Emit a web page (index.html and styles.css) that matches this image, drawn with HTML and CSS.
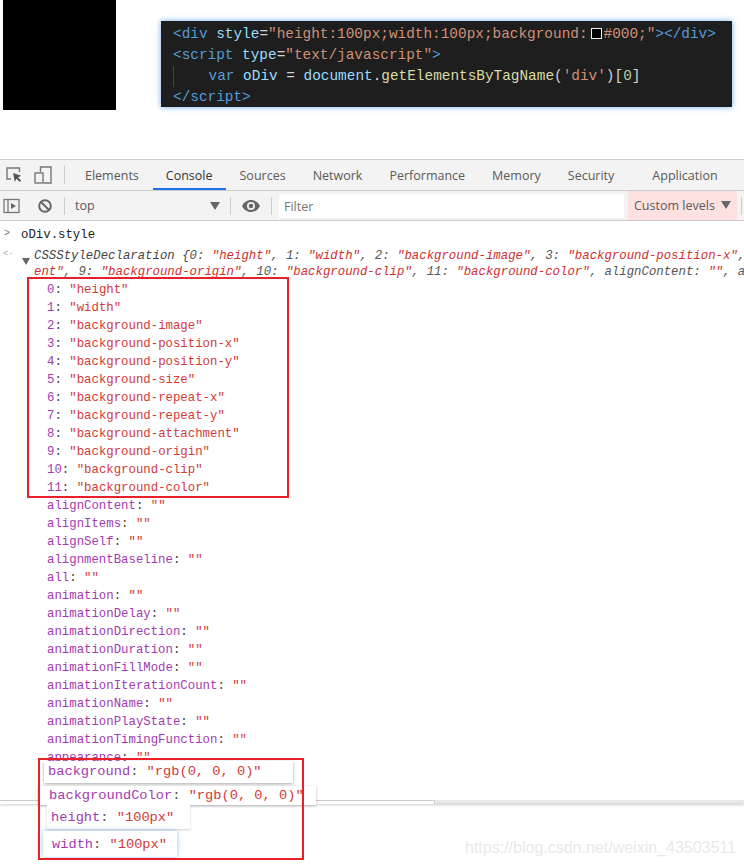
FILE: index.html
```html
<!DOCTYPE html>
<html lang="en">
<head>
    <meta charset="UTF-8">
    <meta name="viewport" content="width=device-width, initial-scale=1.0">
    <title>oDiv.style</title>
    <link rel="stylesheet" href="styles.css">
</head>
<body>
    <div class="page">
        <div class="top">
            <div class="black-box"></div>
            <pre class="code"><span class="tag">&lt;div</span> <span class="attr">style</span>=<span class="str">"height:100px;width:100px;background:</span><span class="swatch"></span><span class="str">#000;"</span><span class="tag">&gt;&lt;/div&gt;</span>
<span class="tag">&lt;script</span> <span class="attr">type</span>=<span class="str">"text/javascript"</span><span class="tag">&gt;</span>
<span class="guide"></span>    <span class="tag">var</span> <span class="attr">oDiv</span> = <span class="attr">document</span>.<span class="fn">getElementsByTagName</span>(<span class="str">'div'</span>)[<span class="num">0</span>]
<span class="tag">&lt;/script&gt;</span></pre>
        </div>

        <div class="tabbar">
            <div class="tool-icons">
                <svg width="18" height="18" viewBox="0 0 18 18" fill="none" stroke="#777" stroke-width="1.4">
                    <path d="M14.500 6V2H2v11h4"/>
                    <path d="M8 7l1.800 9 1.700-3.300 3.300 3.300 1.400-1.400-3.200-3.200 3.200-1.600z" fill="#555" stroke="none"/>
                </svg>
                <svg width="18" height="18" viewBox="0 0 18 18" fill="none" stroke="#777" stroke-width="1.400">
                    <path d="M6.500 6V1h10.500v16H10"/>
                    <rect x="1" y="7" width="8" height="10"/>
                </svg>
            </div>
            <div class="divider"></div>
            <div class="tabs">
                <span class="tab">Elements</span>
                <span class="tab active">Console</span>
                <span class="tab">Sources</span>
                <span class="tab">Network</span>
                <span class="tab">Performance</span>
                <span class="tab">Memory</span>
                <span class="tab">Security</span>
                <span class="tab app">Application</span>
            </div>
        </div>

        <div class="toolbar">
            <svg class="sidebar-icon" width="17" height="16" viewBox="0 0 17 16" fill="none" stroke="#777" stroke-width="1.3">
                <rect x="1" y="1.500" width="15" height="13"/>
                <path d="M5 1.500v13"/>
                <path d="M8 5l5 3-5 3z" fill="#666" stroke="none"/>
            </svg>
            <svg class="no-icon" width="14" height="14" viewBox="0 0 14 14" fill="none" stroke="#666" stroke-width="2">
                <circle cx="7" cy="7" r="5.800"/>
                <path d="M3 3l8 8"/>
            </svg>
            <div class="divider"></div>
            <span class="context">top</span>
            <span class="caret"></span>
            <div class="divider"></div>
            <svg class="eye-icon" width="18" height="12" viewBox="0 0 18 12">
                <path d="M9 0C5 0 1.700 2.500 0 6c1.700 3.500 5 6 9 6s7.300-2.500 9-6c-1.700-3.500-5-6-9-6zm0 10a4 4 0 1 1 0-8 4 4 0 0 1 0 8zm0-6.300a2.300 2.300 0 1 0 0 4.600 2.300 2.300 0 0 0 0-4.600z" fill="#666"/>
            </svg>
            <div class="divider"></div>
            <div class="filter">Filter</div>
            <div class="levels">Custom levels <span class="caret small"></span></div>
            <div class="divider"></div>
        </div>

        <div class="console">
            <div class="prompt"><span class="chevron">&gt;</span>oDiv.style</div>
            <div class="result">
                <span class="back">&lt;·</span>
                <span class="expand"></span>
                <div class="summary"><span class="dim">CSSStyleDeclaration {</span><span class="idx">0: </span>"height"<span class="idx">, 1: </span>"width"<span class="idx">, 2: </span>"background-image"<span class="idx">, 3: </span>"background-position-x"<span class="idx">,</span>
ent"<span class="idx">, 9: </span>"background-origin"<span class="idx">, 10: </span>"background-clip"<span class="idx">, 11: </span>"background-color"<span class="idx">, alignContent: </span>""<span class="idx">, a</span></div>
            </div>
            <div class="props">
                <div><b>0</b>: <i>"height"</i></div>
                <div><b>1</b>: <i>"width"</i></div>
                <div><b>2</b>: <i>"background-image"</i></div>
                <div><b>3</b>: <i>"background-position-x"</i></div>
                <div><b>4</b>: <i>"background-position-y"</i></div>
                <div><b>5</b>: <i>"background-size"</i></div>
                <div><b>6</b>: <i>"background-repeat-x"</i></div>
                <div><b>7</b>: <i>"background-repeat-y"</i></div>
                <div><b>8</b>: <i>"background-attachment"</i></div>
                <div><b>9</b>: <i>"background-origin"</i></div>
                <div><b>10</b>: <i>"background-clip"</i></div>
                <div><b>11</b>: <i>"background-color"</i></div>
                <div><b>alignContent</b>: <i>""</i></div>
                <div><b>alignItems</b>: <i>""</i></div>
                <div><b>alignSelf</b>: <i>""</i></div>
                <div><b>alignmentBaseline</b>: <i>""</i></div>
                <div><b>all</b>: <i>""</i></div>
                <div><b>animation</b>: <i>""</i></div>
                <div><b>animationDelay</b>: <i>""</i></div>
                <div><b>animationDirection</b>: <i>""</i></div>
                <div><b>animationDuration</b>: <i>""</i></div>
                <div><b>animationFillMode</b>: <i>""</i></div>
                <div><b>animationIterationCount</b>: <i>""</i></div>
                <div><b>animationName</b>: <i>""</i></div>
                <div><b>animationPlayState</b>: <i>""</i></div>
                <div><b>animationTimingFunction</b>: <i>""</i></div>
                <div><b>appearance</b>: <i>""</i></div>
            </div>
        </div>

        <div class="bottom-line"></div>

        <!-- pasted strips and red marks over the screenshot -->
        <div class="mark mark-top"></div>
        <div class="strip strip-bg"><b>background</b>: <i>"rgb(0, 0, 0)"</i></div>
        <div class="strip strip-color"><b>backgroundColor</b>: <i>"rgb(0, 0, 0)"</i></div>
        <div class="strip strip-height"><b>height</b>: <i>"100px"</i></div>
        <div class="strip strip-width"><b>width</b>: <i>"100px"</i></div>
        <div class="mark mark-bottom"></div>
        <div class="watermark">https://blog.csdn.net/weixin_43503511</div>
    </div>
</body>
</html>
```

FILE: styles.css
```css
* {
    box-sizing: border-box;
}
body {
    margin: 0;
    background-color: #fff;
}
.page {
    position: relative;
    width: 744px;
    height: 866px;
    overflow: hidden;
    font-family: "Liberation Mono", monospace;
}

/* top picture */
.top {
    display: flex;
    align-items: flex-start;
    height: 159px;
    padding-left: 3px;
}
.black-box {
    width: 113px;
    height: 110px;
    background-color: #000;
}
.code {
    width: 571px;
    height: 86px;
    margin: 21px 0 0 45px;
    padding: 3px 0 0 12px;
    background-color: #1e1e1e;
    box-shadow: 0 0 6px #6fa8e8;
    color: #d4d4d4;
    font-family: "Liberation Mono", monospace;
    font-size: 14.4px;
    line-height: 21px;
    overflow: hidden;
}
.tag {
    color: #569cd6;
}
.attr {
    color: #9cdcfe;
}
.str {
    color: #ce9178;
}
.fn {
    color: #dcdcaa;
}
.num {
    color: #b5cea8;
}
.swatch {
    display: inline-block;
    width: 11px;
    height: 11px;
    margin: 0 2px 0 3px;
    background-color: #000;
    border: 1px solid #eee;
    vertical-align: -1px;
}
.guide {
    display: inline-block;
    width: 0;
    height: 21px;
    border-left: 1px solid #404040;
    vertical-align: top;
}

/* devtools bars */
.tabbar,
.toolbar {
    display: flex;
    align-items: center;
    height: 31px;
    background-color: #f3f3f3;
    border-top: 1px solid #ccc;
    font-family: "Open Sans", sans-serif;
    font-size: 12.5px;
    color: #5a5a5a;
}
.toolbar {
    height: 31px;
    border-bottom: 1px solid #ccc;
}
.tool-icons {
    display: flex;
    gap: 11px;
    padding-left: 5px;
    width: 64px;
}
.divider {
    flex: none;
    width: 1px;
    height: 18px;
    background-color: #ccc;
}
.tabs {
    display: flex;
    gap: 27px;
    height: 100%;
    padding-left: 20px;
    line-height: 32px;
}
.tab {
    position: relative;
}
.tab.active {
    color: #333;
}
.tab.active::after {
    content: "";
    position: absolute;
    left: -13px;
    right: -13px;
    bottom: 0;
    height: 2px;
    background-color: #1a73e8;
}
.tab.app {
    margin-left: 11px;
}
.sidebar-icon {
    margin-left: 3px;
}
.no-icon {
    margin: 0 12px 0 18px;
}
.context {
    margin-left: 10px;
    width: 135px;
}
.caret {
    width: 0;
    height: 0;
    border-left: 5px solid transparent;
    border-right: 5px solid transparent;
    border-top: 8px solid #666;
    margin-right: 10px;
}
.caret.small {
    display: inline-block;
    margin: 0 0 0 3px;
    vertical-align: 1px;
}
.eye-icon {
    margin: 0 11px;
}
.filter {
    width: 345px;
    height: 24px;
    margin-left: 7px;
    padding-left: 5px;
    background-color: #fff;
    line-height: 25px;
    color: #757575;
}
.levels {
    width: 109px;
    height: 100%;
    margin: 0 4px;
    padding-left: 6px;
    background-color: #fde1e1;
    line-height: 29px;
}

/* console output */
.console {
    color: #222;
    font-size: 12.35px;
}
.prompt {
    position: relative;
    height: 18px;
    margin-top: 5px;
    padding-left: 21px;
    line-height: 18px;
}
.chevron {
    position: absolute;
    left: 4px;
    top: -1px;
    color: #777;
    font-size: 10px;
}
.result {
    position: relative;
    margin-top: 4px;
    padding-left: 34px;
}
.back {
    position: absolute;
    left: 3px;
    top: 1px;
    color: #aaa;
    font-size: 9px;
}
.expand {
    position: absolute;
    left: 22px;
    top: 10px;
    border-left: 4px solid transparent;
    border-right: 4px solid transparent;
    border-top: 7px solid #666;
}
.summary {
    height: 33px;
    line-height: 16px;
    font-style: italic;
    color: #d02f2f;
    white-space: pre;
}
.dim {
    color: #444;
}
.idx {
    color: #555;
}
.props {
    padding-left: 47px;
    line-height: 18px;
}
.props div {
    height: 18px;
    color: #444;
}
b {
    font-weight: normal;
    color: #a23bb0;
}
i {
    font-style: normal;
    color: #d13a3a;
}
.bottom-line {
    position: absolute;
    left: 0;
    top: 800px;
    width: 100%;
    height: 3px;
    background-color: #e8e8e8;
    box-shadow: 0 2px 3px rgba(0, 0, 0, 0.2);
}
.bottom-line::before {
    content: "";
    position: absolute;
    left: 0;
    top: 0;
    width: 434px;
    height: 3px;
    background-color: #fff;
    border-top: 1px solid #ccc;
    border-right: 1px solid #ccc;
}

/* overlays */
.mark {
    position: absolute;
    border: 2px solid #e8202a;
}
.mark-top {
    left: 27px;
    top: 277px;
    width: 262px;
    height: 221px;
}
.mark-bottom {
    left: 38px;
    top: 758px;
    width: 266px;
    height: 102px;
}
.strip {
    position: absolute;
    background-color: #fff;
    color: #555;
    font-size: 13.7px;
    white-space: pre;
}
.strip-bg {
    left: 44px;
    top: 761px;
    width: 249px;
    height: 22px;
    padding-left: 4px;
    line-height: 21px;
    box-shadow: 0 1px 3px rgba(0, 0, 0, 0.35);
}
.strip-color {
    left: 38px;
    top: 786px;
    width: 278px;
    height: 19px;
    padding-left: 11px;
    line-height: 19px;
    box-shadow: 0 1px 3px rgba(0, 0, 0, 0.25);
}
.strip-height {
    left: 47px;
    top: 805px;
    width: 143px;
    height: 24px;
    padding-left: 4px;
    line-height: 25px;
    box-shadow: 0 1px 2px rgba(0, 0, 0, 0.2);
}
.strip-width {
    left: 43px;
    top: 831px;
    width: 134px;
    height: 26px;
    padding-left: 9px;
    line-height: 27px;
    box-shadow: 0 0 5px #8fbdf0;
}
.watermark {
    position: absolute;
    left: 465px;
    top: 839px;
    font-family: "Liberation Sans", sans-serif;
    font-size: 16px;
    color: #e9e9e9;
}
```
